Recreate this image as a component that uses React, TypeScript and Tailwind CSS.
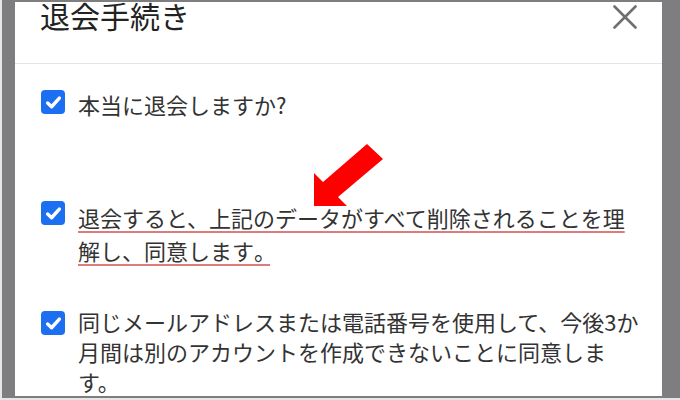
import React from "react";

const font = { fontFamily: '"Noto Sans CJK JP", "Noto Sans", sans-serif' };

function CheckBox({ className = "" }: { className?: string }) {
    return (
        <div className={`shrink-0 w-[24px] h-[24px] rounded-[4px] bg-[#1b6ff0] flex items-center justify-center ${className}`}>
            <svg width="17" height="17" viewBox="0 0 16 16" fill="none">
                <path d="M2.5 8.5 L6.2 12 L13.5 3.8" stroke="#fff" strokeWidth="3.2" strokeLinecap="round" strokeLinejoin="round" />
            </svg>
        </div>
    );
}

function CloseIcon() {
    return (
        <svg width="24" height="24" viewBox="0 0 24 24" fill="none">
            <path d="M1.5 1.5 L22.5 22.5 M22.5 1.5 L1.5 22.5" stroke="#707070" strokeWidth="2.6" strokeLinecap="round" />
        </svg>
    );
}

// red pointer arrow drawn over the content
function Arrow() {
    return (
        <svg
            className="absolute left-[295px] top-[138px] pointer-events-none"
            width="76"
            height="70"
            viewBox="295 138 76 70"
        >
            <polygon
                points="352,142 308,180 299,171 299,204 332,204 323,195 368,157"
                fill="#ff0000"
            />
        </svg>
    );
}

export default function App() {
    return (
        <div className="w-[680px] h-[400px] bg-[#e6e6e8] pl-[2px] pb-[2px] flex" style={font}>
            <div className="flex-1 flex bg-[#7e7e80] pl-[13px] pt-[2px] pr-[18px] pb-[2px]">
                <div className="relative flex-1 bg-white flex flex-col overflow-hidden">
                    {/* header */}
                    <div className="h-[63px] flex items-start justify-between pl-[25px] pr-[25px] border-b border-[#e4e4e4]">
                        <h1 className="text-[30px] leading-[26px] text-[#222]">退会手続き</h1>
                        <div className="mt-[3px]">
                            <CloseIcon />
                        </div>
                    </div>

                    {/* body */}
                    <div className="flex flex-col pl-[26px] text-[22px] text-[#333]">
                        <div className="flex items-start gap-[13px] mt-[25px]">
                            <CheckBox className="mt-[1px]" />
                            <p className="leading-[30px]">本当に退会しますか?</p>
                        </div>

                        <div className="flex items-start gap-[13px] mt-[82px]">
                            <CheckBox />
                            <p className="w-[566px] leading-[33px]">
                                <span className="underline decoration-[#de7b7b] decoration-2 underline-offset-[4px]">
                                    退会すると、上記のデータがすべて削除されることを理解し、同意します
                                    <span className="tracking-[-6px]">。</span>
                                </span>
                            </p>
                        </div>

                        <div className="flex items-start gap-[13px] mt-[39px]">
                            <CheckBox className="mt-[5px]" />
                            <p className="w-[566px] leading-[30px]">
                                同じメールアドレスまたは電話番号を使用して、今後3か月間は別のアカウントを作成できないことに同意します。
                            </p>
                        </div>
                    </div>

                    <Arrow />
                </div>
            </div>
        </div>
    );
}
